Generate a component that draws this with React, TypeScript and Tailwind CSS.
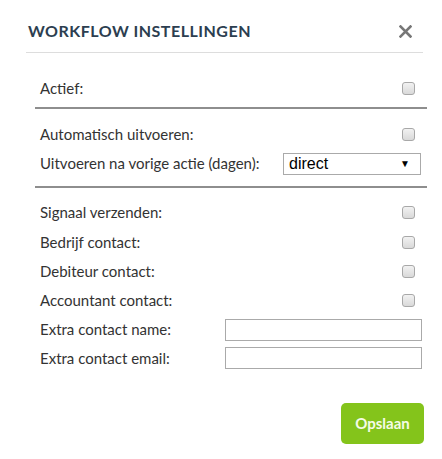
import React from "react";

const CheckRow = ({ label, h = "h-[30px]" }: { label: string; h?: string }) => (
  <div className={`flex items-center justify-between pl-[5px] pr-[12px] ${h}`}>
    <span>{label}</span>
    <div className="w-[13px] h-[13px] rounded-[3px] border border-[#a8a8a8] bg-gradient-to-b from-[#f2f2f2] to-[#d9d9d9]"></div>
  </div>
);

const InputRow = ({ label, h }: { label: string; h: string }) => (
  <div className={`flex items-center pl-[5px] ${h}`}>
    <span className="w-[185px] shrink-0">{label}</span>
    <div className="w-[197px] h-[22px] shrink-0 border border-[#aaaaaa] bg-white"></div>
  </div>
);

export default function App() {
  return (
    <div className="w-[442px] h-[459px] bg-white text-[15px] text-[#333] font-['Lato','Open_Sans',sans-serif]">
      {/* Header */}
      <div className="ml-[26px] mr-[19px] h-[53px] border-b border-[#dddddd] flex items-start justify-between pt-[19px] pl-[2px] pr-[11px]">
        <h1 className="text-[16px] leading-[24px] font-bold tracking-[0.5px] text-[#2c3e50]">
          WORKFLOW INSTELLINGEN
        </h1>
        <svg width="13" height="13" viewBox="0 0 13 13" className="mt-[6px]">
          <path d="M1.5 1.5 L11.5 11.5 M11.5 1.5 L1.5 11.5" stroke="#777" strokeWidth="2.6" strokeLinecap="square" />
        </svg>
      </div>

      {/* Body */}
      <div className="ml-[35px] mr-[15px] pt-[20px]">
        <CheckRow label="Actief:" />
        <div className="mt-[4px] h-[2px] bg-[#8e8e8e]"></div>

        <div className="mt-[11px]">
          <CheckRow label="Automatisch uitvoeren:" h="h-[29px]" />
          <div className="flex items-center h-[29px] pl-[5px]">
            <span className="w-[243px] shrink-0">Uitvoeren na vorige actie (dagen):</span>
            <div className="w-[138px] h-[22px] shrink-0 border border-[#aaaaaa] flex items-center justify-between pl-[5px] pr-[10px] font-['Liberation_Sans',Arial,sans-serif] text-[16px] text-black">
              <span>direct</span>
              <span className="text-[10px]">▼</span>
            </div>
          </div>
        </div>
        <div className="mt-[8px] h-[2px] bg-[#8e8e8e]"></div>

        <div className="mt-[9px]">
          <CheckRow label="Signaal verzenden:" />
          <CheckRow label="Bedrijf contact:" />
          <CheckRow label="Debiteur contact:" h="h-[29px]" />
          <CheckRow label="Accountant contact:" h="h-[29px]" />
          <InputRow label="Extra contact name:" h="h-[29px]" />
          <InputRow label="Extra contact email:" h="h-[28px]" />
        </div>

        <div className="flex justify-end mt-[31px] mr-[3px]">
          <button className="w-[83px] h-[41px] rounded-[5px] bg-[#84c41b] text-[#f5fbe6] text-[15px] font-bold">
            Opslaan
          </button>
        </div>
      </div>
    </div>
  );
}
